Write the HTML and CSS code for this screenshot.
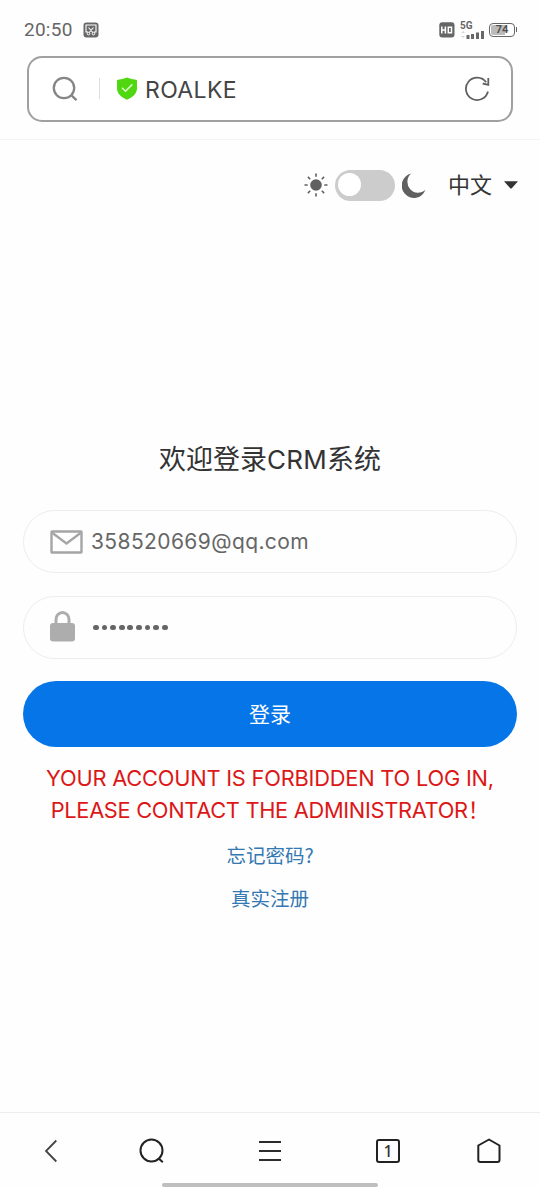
FILE: index.html
```html
<!DOCTYPE html>
<html lang="zh-CN">
<head>
<meta charset="utf-8">
<meta name="viewport" content="width=device-width, initial-scale=1">
<title>ROALKE</title>
<link rel="stylesheet" href="styles.css">
</head>
<body>
<div class="screen">
  <div class="status">
    <span class="clock">20:50</span>
    <svg class="shot" width="16" height="16" viewBox="0 0 16 16"><rect x=".5" y=".5" width="15" height="15" rx="3" fill="#686868"/><path d="M5 10H3V3h10v7h-2M5.500 5.500l4.300 5M10.500 5.500l-4.300 5" fill="none" stroke="#fff" stroke-width="1.100"/><circle cx="5.500" cy="11.600" r="1.300" fill="none" stroke="#fff"/><circle cx="10.500" cy="11.600" r="1.300" fill="none" stroke="#fff"/></svg>
    <svg class="hd" width="16" height="16" viewBox="0 0 16 16"><rect x=".3" y=".3" width="15.200" height="15.200" rx="3" fill="#666"/><path d="M2.800 4.500v7M6.400 4.500v7M2.800 8h3.600M9.300 5.200h3.200v5.600H9.300z" fill="none" stroke="#fff" stroke-width="1.500"/></svg>
    <div class="signal">
      <span class="net">5G</span>
      <svg width="24" height="9" viewBox="0 0 24 9"><path d="M1 3l2-2 2 2zM1 6l2 2 2-2z" fill="#d5d5d5"/><path d="M6.500 5h3v4h-3zM11 4h3v5h-3zM16 2.500h3V9h-3zM21 1h3v8h-3z" fill="#686868"/></svg>
    </div>
    <div class="battery"><span>74</span></div>
  </div>

  <div class="address">
    <svg class="find" width="26" height="26" viewBox="0 0 26 26" fill="none" stroke="#858585" stroke-width="2.300"><circle cx="12" cy="12" r="10.200"/><path d="M19.200 19.200l5.300 5"/></svg>
    <i class="rule"></i>
    <svg class="shield" width="20" height="23" viewBox="0 0 20 23"><path d="M10 .4Q14.500 2.300 19 2.700q1 .1 1 1.100v7.700c0 5-4.500 9-10 11.300C4.500 20.500 0 16.500 0 11.500V3.800q0-1 1-1.100Q5.500 2.300 10 .4z" fill="#4fd810"/><path d="M5 10.800l3.500 3.400 6.800-6.800" fill="none" stroke="#dcfacd" stroke-width="1.600"/></svg>
    <span class="site">ROALKE</span>
    <svg class="reload" width="26" height="26" viewBox="0 0 26 26" fill="none" stroke="#606060" stroke-width="1.800"><path d="M24 15.500A11.200 11.200 0 1 1 22.200 6.200M24.300 2v6.800l-5.600-1.300"/></svg>
  </div>

  <main class="page">
    <div class="tools">
      <svg class="sun" width="24" height="24" viewBox="0 0 24 24"><circle cx="12" cy="12" r="5.800" fill="#606060"/><path d="M12 .5v3.200M12 20.300v3.200M.5 12h3.200M20.300 12h3.200M3.900 3.900l2.300 2.300M17.800 17.800l2.300 2.300M3.900 20.100l2.300-2.300M17.800 6.200l2.300-2.300" stroke="#606060" stroke-width="1.600"/></svg>
      <div class="switch"><i></i></div>
      <svg class="moon" width="24" height="25" viewBox="0 0 24 25"><path d="M9.200.6a12.300 12.300 0 1 0 14.200 16.500A10.800 10.800 0 0 1 9.200.6z" fill="#606060"/></svg>
      <span class="lang">中文</span>
      <svg class="caret" width="14" height="8" viewBox="0 0 14 8"><path d="M0 .3h14L8 7q-1 1-2 0z" fill="#333"/></svg>
    </div>

    <h1 class="title">欢迎登录<span>CRM</span>系统</h1>
    <div class="field">
      <svg class="mail" width="33" height="24" viewBox="0 0 33 24" fill="none" stroke="#a5a5a5" stroke-width="2.400"><rect x="1.500" y="1.500" width="30" height="21" rx=".5"/><path d="M2.500 3l14 10.500L30.500 3" stroke-width="2.300"/></svg>
      <span class="email">358520669@qq.com</span>
    </div>
    <div class="field">
      <svg class="lock" width="25" height="31" viewBox="0 0 25 31"><rect x="0" y="12" width="25" height="18.500" rx="3" fill="#adadad"/><path d="M6 13V8.500a6.500 7 0 0 1 13 0V13" fill="none" stroke="#adadad" stroke-width="3"/></svg>
      <div class="dots"><i></i><i></i><i></i><i></i><i></i><i></i><i></i><i></i><i></i></div>
    </div>
    <div class="login">登录</div>
    <div class="error"><div class="line-a">YOUR ACCOUNT IS FORBIDDEN TO LOG IN,</div><div class="line-b">PLEASE CONTACT THE ADMINISTRATOR<span>&#xFF01;</span></div></div>
    <a class="link">忘记密码?</a>
    <a class="link">真实注册</a>
  </main>

  <nav class="nav">
    <div class="icons">
      <svg class="back" width="14" height="24" viewBox="0 0 14 24" fill="none" stroke="#444" stroke-width="1.800"><path d="M12.300 1.500L2 12l10.300 10.500"/></svg>
      <svg class="search" width="26" height="26" viewBox="0 0 26 26" fill="none" stroke="#222" stroke-width="2"><circle cx="12.500" cy="12.500" r="11"/><path d="M19.500 20.200l4.300 4"/></svg>
      <svg class="menu" width="22" height="22" viewBox="0 0 22 22" stroke="#2c2c2c" stroke-width="2"><path d="M0 2h22M0 11h22M0 20h22"/></svg>
      <div class="tabs">1</div>
      <svg class="home" width="24" height="26" viewBox="0 0 24 26" fill="none" stroke="#222" stroke-width="2" stroke-linejoin="round"><path d="M12 1.500L22.500 7.500V22q0 2-2 2H3.300q-2 0-2-2V7.500z"/></svg>
    </div>
    <i class="handle"></i>
  </nav>
</div>
</body>
</html>
```
FILE: styles.css
```css
* { box-sizing: border-box; }
body { margin: 0; background: #fefefe; font-family: Inter, "Noto Sans CJK SC", sans-serif; color: #333; }
svg { display: block; flex: none; }
.screen { width: 540px; height: 1188px; display: flex; flex-direction: column; overflow: hidden; }

.status { height: 55.500px; padding: 4px 24px 0; display: flex; align-items: center; color: #666; }
.clock { width: 49px; font: 19px/24px Roboto, sans-serif; letter-spacing: .25px; white-space: nowrap; }
.shot { margin-left: 9.500px; }
.hd { margin-left: auto; }
.signal { width: 24px; height: 18px; margin: 0 5px; display: flex; flex-direction: column; justify-content: space-between; }
.net { font: bold 10px/9px Roboto, sans-serif; }
.battery { position: relative; width: 26px; height: 14px; margin-right: 1px; border: 1.500px solid #666; border-radius: 4px; padding: 1px; background: linear-gradient(90deg, #bbb 65%, #fff 65%) content-box; font: bold 11px/10px Roboto, sans-serif; text-align: center; color: #505050; }
.battery::after { content: ""; position: absolute; right: -3px; top: 3px; width: 1.500px; height: 5px; background: #666; }

.address { width: 486px; height: 66px; margin: 0 27px; border: 2px solid #a0a0a0; border-radius: 15px; background: #fff; display: flex; align-items: center; padding: 0 21px 0 23px; }
.rule { width: 1px; height: 21px; margin: 0 17px 0 21px; background: #ddd; }
.site { margin-left: 8px; font-size: 23px; line-height: 30px; letter-spacing: .35px; color: #444; padding-top: 2px; }
.reload { margin-left: auto; }

.page { flex: 1; margin-top: 17px; border-top: 1px solid #f3f3f3; padding: 0 23px; display: flex; flex-direction: column; }
.tools { height: 32px; margin-top: 29.500px; margin-right: -1px; display: flex; align-items: center; justify-content: flex-end; }
.switch { width: 60px; height: 31px; margin: 0 7px; border-radius: 16px; background: #ccc; padding: 3px; }
.switch i { display: block; width: 23px; height: 23px; border-radius: 50%; background: #fff; }
.lang { margin-left: 22px; padding-bottom: 3px; font: 22px/29px "Noto Sans CJK SC", sans-serif; }
.caret { margin-left: 12px; }

.title { margin: 239px 0 0; height: 36px; text-align: center; font: 27px/36px "Noto Sans CJK SC", sans-serif; white-space: nowrap; }
.title span { font-family: Inter, sans-serif; font-size: 26px; letter-spacing: .3px; }
.field { height: 63px; margin-top: 34px; border: 1.500px solid #ededed; border-radius: 32px; display: flex; align-items: center; padding-left: 26px; color: #666; }
.field + .field { margin-top: 23px; }
.lock { margin-bottom: 2px; }
.email { margin-left: 8px; font-size: 21px; line-height: 28px; font-weight: 400; letter-spacing: .4px; white-space: nowrap; }
.dots { display: flex; gap: 2.800px; margin-left: 18px; }
.dots i { width: 5.800px; height: 5.800px; border-radius: 50%; background: #666; }
.login { height: 66px; margin-top: 22px; border-radius: 33px; background: #0675e8; color: #fff; text-align: center; font: 21px/65px "Noto Sans CJK SC", sans-serif; }
.error { margin-top: 15px; color: #dc1717; font-size: 21.800px; line-height: 32px; text-align: center; white-space: nowrap; }
.line-a { letter-spacing: -.2px; }
.line-b { height: 32px; letter-spacing: -.3px; }
.line-b span { font-family: "Noto Sans CJK SC", sans-serif; line-height: 1; }
.link { display: block; height: 28px; margin-top: 15px; text-align: center; color: #3478b2; font: 19.500px/28px "Noto Sans CJK SC", sans-serif; }

.nav { height: 76px; border-top: 1px solid #ededed; display: flex; flex-direction: column; align-items: center; }
.icons { width: 100%; height: 70px; padding: 5px 0 0 44px; display: flex; align-items: center; }
.search { margin-left: 81px; }
.menu { margin-left: 94px; }
.tabs { width: 24px; height: 24px; margin-left: 95px; border: 2px solid #222; border-radius: 3px; font: 500 16px/21px "Noto Sans", sans-serif; text-align: center; }
.home { margin-left: 77px; }
.handle { flex: none; width: 216px; height: 4px; border-radius: 2px; background: #bfbfbf; }
```
